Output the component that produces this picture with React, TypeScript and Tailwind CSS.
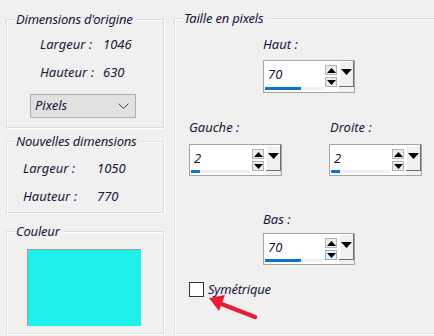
import React from 'react';

const txt = 'text-[#17173a]';

const GroupBox = ({ label, className, children }: { label: string; className: string; children?: React.ReactNode }) => (
  <div className={`relative border border-[#dcdcdc] shadow-[inset_1px_1px_0_#fff,1px_1px_0_#fff] ${className}`}>
    <span className={`absolute left-[8px] top-[-9px] bg-[#f0f0f0] pr-[3px] pl-[1px] text-[13px] leading-[16px] italic tracking-[-0.2px] ${txt}`}>
      {label}
    </span>
    {children}
  </div>
);

const Triangle = ({ up, size = 4 }: { up?: boolean; size?: number }) => (
  <svg width={size * 2 + 1} height={size + 1} viewBox={`0 0 ${size * 2 + 1} ${size + 1}`}>
    {up ? (
      <path d={`M0 ${size + 1} L${size + 0.5} 0 L${size * 2 + 1} ${size + 1} Z`} fill="#000" />
    ) : (
      <path d={`M0 0 L${size * 2 + 1} 0 L${size + 0.5} ${size + 1} Z`} fill="#000" />
    )}
  </svg>
);

const SpinBox = ({ value, bar, hoverDown, className }: { value: string; bar: number; hoverDown?: boolean; className: string }) => (
  <div className={`flex border border-[#a5a5a5] bg-[#f0f0f0] ${className}`}>
    <div className="flex flex-1 flex-col bg-white">
      <div className={`flex flex-1 items-center pl-[4px] pt-[2px] text-[13px] italic ${txt}`}>{value}</div>
      <div className="mx-[1px] mb-[2px] h-[3px] bg-[#f0f0f0]">
        <div className="h-full bg-[#0a74d6]" style={{ width: bar }} />
      </div>
    </div>
    <div className="flex w-[14px] flex-col items-center gap-[2px] bg-white pt-[4px]">
      <div className="flex h-[10px] w-[12px] items-center justify-center border border-[#b4b4b4] bg-[#ececec]">
        <Triangle up />
      </div>
      <div className={`flex h-[10px] w-[12px] items-center justify-center border ${hoverDown ? 'border-[#7ab6e8] bg-[#e5f1fb]' : 'border-[#b4b4b4] bg-[#ececec]'}`}>
        <Triangle />
      </div>
    </div>
    <div className="flex flex-col bg-white pl-[1px]">
      <div className="flex h-[26px] w-[15px] items-start justify-center border-r border-b border-[#6e6e6e] bg-[#f0f0f0] pt-[8px] shadow-[inset_1px_1px_0_#fff]">
        <Triangle size={5} />
      </div>
      <div className="flex-1 bg-[#f0f0f0]" />
    </div>
  </div>
);

export default function App() {
  return (
    <div className="relative flex h-[336px] w-[434px] overflow-hidden bg-[#f0f0f0] pl-[6px] font-['Noto_Sans',sans-serif]">
      {/* left column */}
      <div className="flex w-[158px] shrink-0 flex-col">
        <GroupBox label="Dimensions d'origine" className="mt-[19px] h-[109px]">
          <div className={`ml-[33px] mt-[15px] grid grid-cols-[63px_auto] gap-y-[10px] text-[13px] italic leading-[18px] ${txt}`}>
            <span>Largeur :</span>
            <span>1046</span>
            <span>Hauteur :</span>
            <span>630</span>
          </div>
          <div className="ml-[23px] mt-[13px] flex h-[24px] w-[106px] items-center justify-between border border-[#adadad] bg-[#e1e1e1] pl-[4px] pr-[6px]">
            <span className={`text-[13px] italic ${txt}`}>Pixels</span>
            <svg width="11" height="6" viewBox="0 0 11 6">
              <path d="M0.5 0.5 L5.5 5.5 L10.5 0.5" fill="none" stroke="#444" strokeWidth="1" />
            </svg>
          </div>
        </GroupBox>

        <GroupBox label="Nouvelles dimensions" className="mt-[13px] h-[72px]">
          <div className={`ml-[16px] mt-[17px] grid grid-cols-[74px_auto] gap-y-[10px] text-[13px] italic leading-[18px] ${txt}`}>
            <span>Largeur :</span>
            <span>1050</span>
            <span>Hauteur :</span>
            <span>770</span>
          </div>
        </GroupBox>

        <GroupBox label="Couleur" className="mt-[18px] h-[103px]">
          <div className="ml-[20px] mt-[17px] h-[77px] w-[114px] border-l border-t border-[#a0a0a0] bg-[#1ef0ec]" />
        </GroupBox>
      </div>

      {/* right group */}
      <GroupBox label="Taille en pixels" className="ml-[10px] mt-[18px] h-[316px] w-[270px] shrink-0">
        <div className="flex flex-col">
          <div className="ml-[88px] mt-[16px] flex flex-col">
            <span className={`text-[13px] italic leading-[18px] ${txt}`}>Haut :</span>
            <SpinBox value="70" bar={36} className="mt-[7px] h-[33px] w-[92px]" />
          </div>

          <div className="ml-[14px] mt-[25px] flex gap-[47px]">
            <div className="flex flex-col">
              <span className={`text-[13px] italic leading-[18px] ${txt}`}>Gauche :</span>
              <SpinBox value="2" bar={9} className="mt-[8px] h-[32px] w-[93px]" />
            </div>
            <div className="flex flex-col">
              <span className={`text-[13px] italic leading-[18px] pl-[1px] ${txt}`}>Droite :</span>
              <SpinBox value="2" bar={9} className="mt-[8px] h-[32px] w-[93px]" />
            </div>
          </div>

          <div className="ml-[88px] mt-[34px] flex flex-col">
            <span className={`text-[13px] italic leading-[18px] ${txt}`}>Bas :</span>
            <SpinBox value="70" bar={36} hoverDown className="mt-[5px] h-[32px] w-[92px]" />
          </div>

          <div className="ml-[14px] mt-[15px] flex items-center gap-[4px]">
            <div className="h-[15px] w-[15px] border border-[#333] bg-white" />
            <span className={`text-[13px] italic leading-[18px] tracking-[-0.2px] ${txt}`}>Symétrique</span>
          </div>
        </div>
      </GroupBox>

      {/* red annotation arrow */}
      <svg className="absolute left-[205px] top-[291px]" width="56" height="32" viewBox="0 0 56 32">
        <path d="M50 26 L14 12" stroke="#ea1b34" strokeWidth="4.5" strokeLinecap="round" />
        <path d="M4 7 L20 4 L14 20 Z" fill="#ea1b34" />
      </svg>
    </div>
  );
}
